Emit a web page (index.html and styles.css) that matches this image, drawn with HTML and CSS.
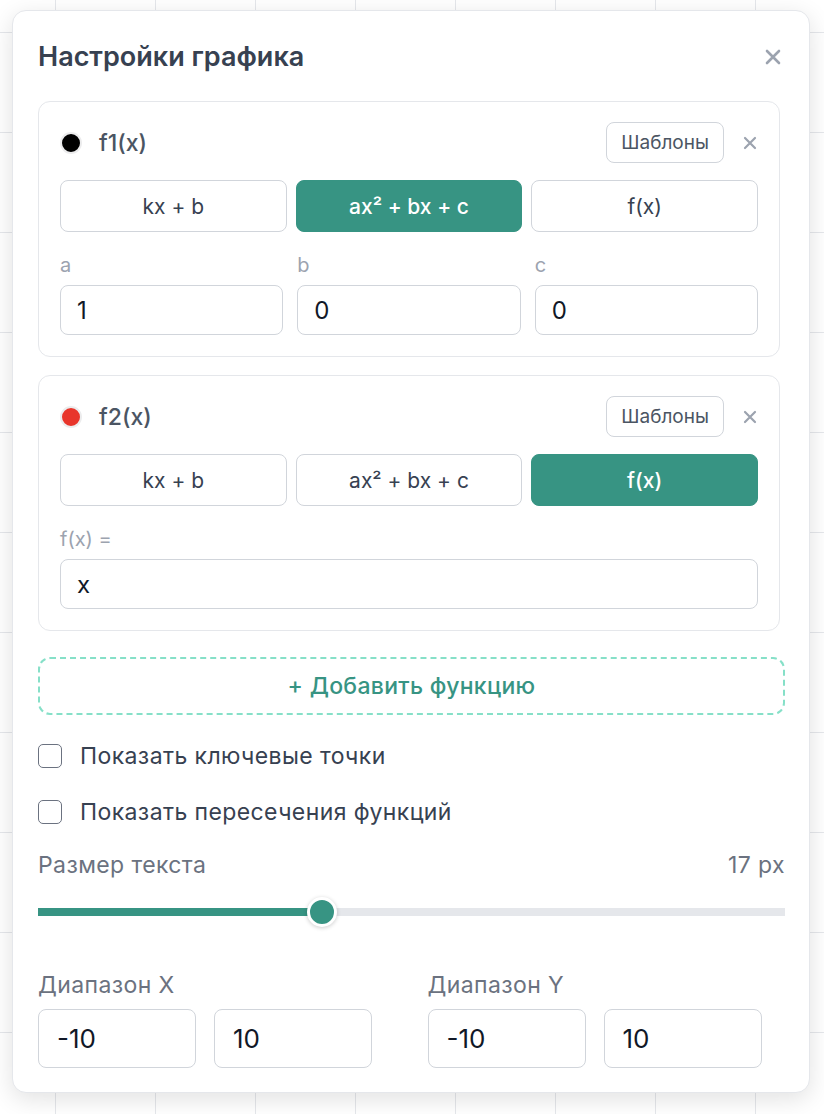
FILE: index.html
```html
<!DOCTYPE html>
<html lang="ru">
<head>
  <meta charset="UTF-8">
  <title>Настройки графика</title>
  <link rel="stylesheet" href="styles.css">
</head>
<body>

  <div class="panel">
    <div class="panel-head">
      <h2 class="panel-title">Настройки графика</h2>
      <button class="close-btn" title="Закрыть">
        <svg width="18" height="18" viewBox="0 0 18 18"><path d="M3 3L15 15M15 3L3 15" stroke="#9ca3af" stroke-width="2.6" stroke-linecap="round"/></svg>
      </button>
    </div>

    <!-- f1 -->
    <div class="func-card">
      <div class="func-head">
        <span class="func-dot" style="background:#000000;"></span>
        <span class="func-name">f1(x)</span>
        <button class="tpl-btn">Шаблоны</button>
        <button class="remove-btn" title="Удалить">
          <svg width="14" height="14" viewBox="0 0 14 14"><path d="M2 2L12 12M12 2L2 12" stroke="#9ca3af" stroke-width="2.2" stroke-linecap="round"/></svg>
        </button>
      </div>
      <div class="type-switch">
        <button class="type-btn">kx + b</button>
        <button class="type-btn active">ax² + bx + c</button>
        <button class="type-btn">f(x)</button>
      </div>
      <div class="coef-grid">
        <label class="field">
          <span class="field-label">a</span>
          <input class="field-input" type="text" value="1">
        </label>
        <label class="field">
          <span class="field-label">b</span>
          <input class="field-input" type="text" value="0">
        </label>
        <label class="field">
          <span class="field-label">c</span>
          <input class="field-input" type="text" value="0">
        </label>
      </div>
    </div>

    <!-- f2 -->
    <div class="func-card">
      <div class="func-head">
        <span class="func-dot" style="background:#e8352b;"></span>
        <span class="func-name">f2(x)</span>
        <button class="tpl-btn">Шаблоны</button>
        <button class="remove-btn" title="Удалить">
          <svg width="14" height="14" viewBox="0 0 14 14"><path d="M2 2L12 12M12 2L2 12" stroke="#9ca3af" stroke-width="2.2" stroke-linecap="round"/></svg>
        </button>
      </div>
      <div class="type-switch">
        <button class="type-btn">kx + b</button>
        <button class="type-btn">ax² + bx + c</button>
        <button class="type-btn active">f(x)</button>
      </div>
      <div class="coef-grid single">
        <label class="field">
          <span class="field-label">f(x) =</span>
          <input class="field-input" type="text" value="x">
        </label>
      </div>
    </div>

    <button class="add-btn">+ Добавить функцию</button>

    <label class="check-row">
      <input type="checkbox" class="check-box">
      <span>Показать ключевые точки</span>
    </label>
    <label class="check-row">
      <input type="checkbox" class="check-box">
      <span>Показать пересечения функций</span>
    </label>

    <div class="size-row">
      <span>Размер текста</span>
      <span>17 px</span>
    </div>
    <input class="size-slider" type="range" min="8" max="32" value="17" style="--fill: 37.9%;">

    <div class="range-grid">
      <div class="range-col">
        <div class="range-label">Диапазон X</div>
        <div class="range-inputs">
          <input class="range-input" type="text" value="-10">
          <input class="range-input" type="text" value="10">
        </div>
      </div>
      <div class="range-col">
        <div class="range-label">Диапазон Y</div>
        <div class="range-inputs">
          <input class="range-input" type="text" value="-10">
          <input class="range-input" type="text" value="10">
        </div>
      </div>
    </div>
  </div>

</body>
</html>
```

FILE: styles.css
```css
body {
  margin: 0;
  font-family: Inter, "Noto Sans", sans-serif;
  background-color: #ffffff;
  background-image:
    linear-gradient(to right, #e5e7eb 1px, transparent 1px),
    linear-gradient(to bottom, #e5e7eb 1px, transparent 1px);
  background-size: 100px 100px;
  background-position: 55px 32px;
  min-height: 1114px;
  padding: 10px 0 0 12px;
  box-sizing: border-box;
}

button, input {
  font-family: inherit;
}

.panel {
  width: 798px;
  box-sizing: border-box;
  background: #ffffff;
  border: 1px solid #e5e7eb;
  border-radius: 14px;
  box-shadow: 0 6px 24px rgba(0, 0, 0, 0.12);
  padding: 30px 24px 24px 25px;
}

.panel-head {
  display: flex;
  align-items: center;
  justify-content: space-between;
  height: 32px;
}

.panel-title {
  margin: 0;
  font-size: 27px;
  line-height: 32px;
  font-weight: 600;
  color: #374151;
}

.close-btn {
  border: none;
  background: none;
  padding: 0;
  width: 18px;
  height: 18px;
  margin-right: 3px;
  cursor: pointer;
}

.func-card {
  margin: 28px 5px 0 0;
  border: 1px solid #e5e7eb;
  border-radius: 12px;
  padding: 20px 21px 21px 21px;
}

.func-card + .func-card {
  margin-top: 18px;
}

.func-head {
  display: flex;
  align-items: center;
  height: 41px;
}

.func-dot {
  width: 18px;
  height: 18px;
  border-radius: 50%;
  border: 2px solid #ececed;
  margin-right: 17px;
}

.func-name {
  flex: 1;
  font-size: 23px;
  font-weight: 500;
  color: #4b5563;
}

.tpl-btn {
  height: 41px;
  padding: 0 14px;
  border: 1px solid #d1d5db;
  border-radius: 8px;
  background: #ffffff;
  font-size: 19px;
  color: #4b5563;
  cursor: pointer;
}

.remove-btn {
  border: none;
  background: none;
  padding: 0;
  width: 14px;
  height: 14px;
  margin-left: 19px;
  margin-right: 1px;
  cursor: pointer;
}

.type-switch {
  display: grid;
  grid-template-columns: repeat(3, 1fr);
  gap: 9px;
  margin-top: 17px;
}

.type-btn {
  height: 52px;
  border: 1px solid #d1d5db;
  border-radius: 8px;
  background: #ffffff;
  font-size: 21px;
  color: #374151;
  cursor: pointer;
}

.type-btn.active {
  background: #379483;
  border-color: #379483;
  color: #ffffff;
  font-weight: 500;
}

.coef-grid {
  display: grid;
  grid-template-columns: repeat(3, minmax(0, 1fr));
  gap: 14px;
  margin-top: 23px;
}

.coef-grid.single {
  grid-template-columns: minmax(0, 1fr);
}

.field {
  display: flex;
  flex-direction: column;
  gap: 10px;
  min-width: 0;
}

.field-label {
  font-size: 20px;
  line-height: 20px;
  color: #9ca3af;
}

.field-input {
  width: 100%;
  height: 50px;
  box-sizing: border-box;
  border: 1px solid #d1d5db;
  border-radius: 8px;
  padding: 0 16px;
  font-size: 24px;
  color: #111827;
  outline: none;
}

.add-btn {
  display: block;
  width: 100%;
  height: 58px;
  margin-top: 26px;
  border: 2px dashed #86e0c8;
  border-radius: 12px;
  background: transparent;
  font-size: 23px;
  letter-spacing: 0.3px;
  font-weight: 500;
  color: #379483;
  cursor: pointer;
}

.check-row {
  display: flex;
  align-items: center;
  gap: 18px;
  height: 32px;
  margin-top: 25px;
  font-size: 23px;
  letter-spacing: 0.4px;
  color: #374151;
}

.check-row + .check-row {
  margin-top: 24px;
}

.check-box {
  appearance: none;
  -webkit-appearance: none;
  margin: 0;
  width: 24px;
  height: 24px;
  border: 1.5px solid #6b7280;
  border-radius: 5px;
  background: #ffffff;
}

.size-row {
  display: flex;
  justify-content: space-between;
  line-height: 28px;
  margin-top: 23px;
  font-size: 23px;
  letter-spacing: 0.4px;
  color: #6b7280;
}

.size-slider {
  -webkit-appearance: none;
  appearance: none;
  display: block;
  width: 100%;
  height: 28px;
  margin: 19px 0 0 0;
  background: transparent;
}

.size-slider::-webkit-slider-runnable-track {
  height: 8px;
  background: linear-gradient(to right, #379483 var(--fill), #e5e7eb var(--fill));
}

.size-slider::-webkit-slider-thumb {
  -webkit-appearance: none;
  width: 30px;
  height: 30px;
  margin-top: -11px;
  border-radius: 50%;
  background: #379483;
  border: 3px solid #ffffff;
  box-sizing: border-box;
  box-shadow: 0 1px 4px rgba(0, 0, 0, 0.2);
}

.range-grid {
  display: grid;
  grid-template-columns: 1fr 1fr;
  gap: 32px;
  margin-top: 45px;
}

.range-label {
  font-size: 23px;
  letter-spacing: 0.4px;
  line-height: 28px;
  color: #6b7280;
}

.range-inputs {
  display: flex;
  gap: 18px;
  margin-top: 10px;
}

.range-input {
  width: 158px;
  height: 59px;
  box-sizing: border-box;
  border: 1px solid #d1d5db;
  border-radius: 8px;
  padding: 0 18px;
  font-size: 26px;
  color: #111827;
  outline: none;
}
```
